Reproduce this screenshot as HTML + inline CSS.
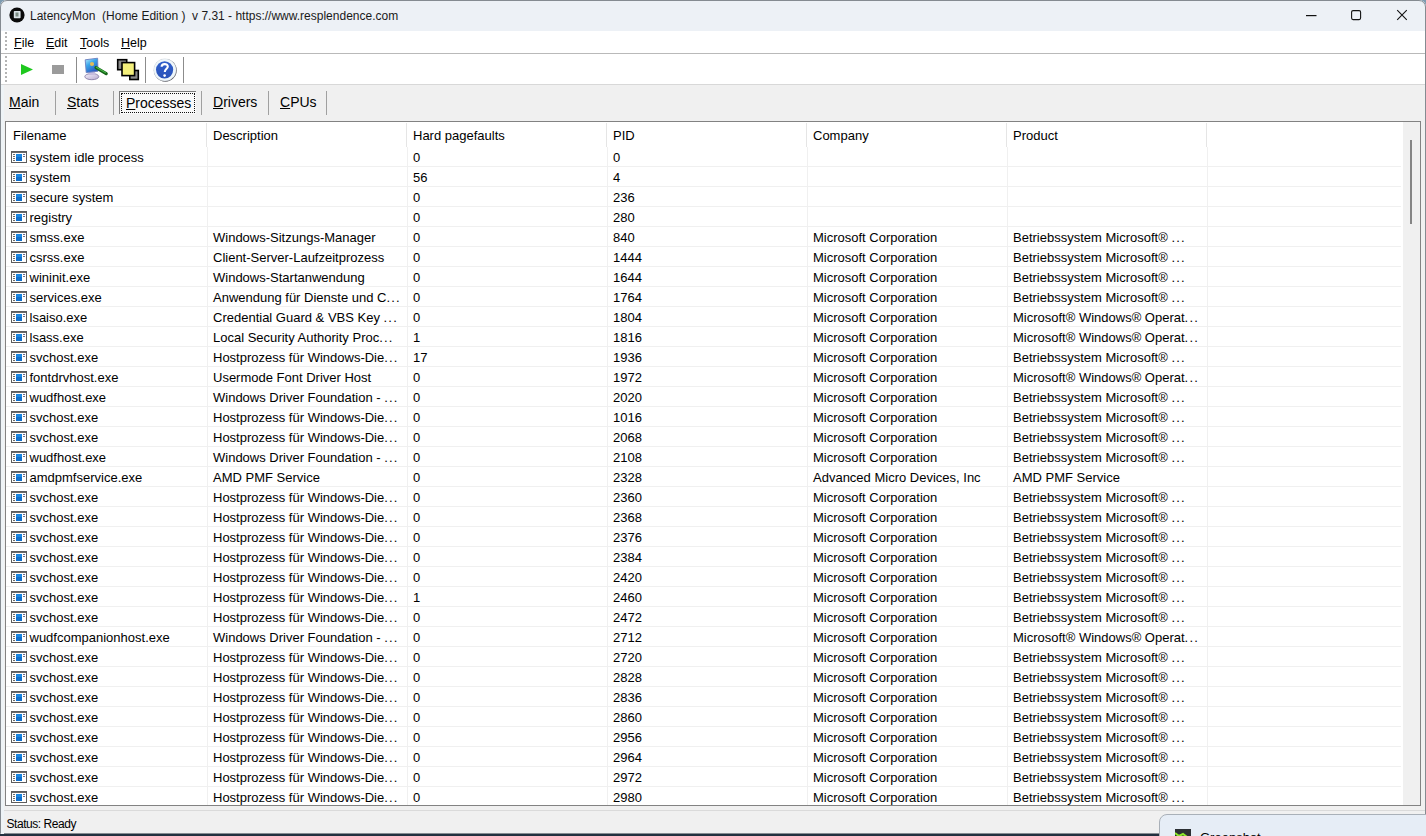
<!DOCTYPE html>
<html><head><meta charset="utf-8"><title>LatencyMon</title>
<style>
*{margin:0;padding:0;box-sizing:border-box}
html,body{width:1426px;height:836px;overflow:hidden;background:#7e9bb0;font-family:"Liberation Sans",sans-serif;color:#000}
.abs{position:absolute}
#win{position:absolute;left:0;top:0;width:1426px;height:834px;background:#f0f0f0;border-radius:7px 7px 0 0;overflow:hidden}
#frame{position:absolute;left:0;top:0;width:1426px;height:834px;border:1px solid #858b91;border-radius:7px 7px 0 0;pointer-events:none}
#title{position:absolute;left:0;top:0;width:1426px;height:31px;background:#edf1f6}
#ttext{position:absolute;left:30px;top:7.5px;font-size:12px;line-height:16px;color:#1a1a1a;white-space:pre}
#menu{position:absolute;left:0;top:31px;width:1426px;height:22px;background:#fff}
#mline{position:absolute;left:0;top:53px;width:1426px;height:1px;background:#b9b9b9}
#tool{position:absolute;left:0;top:54px;width:1426px;height:30px;background:#fff}
#tline{position:absolute;left:0;top:84px;width:1426px;height:1px;background:#d8d8d8}
.dot{position:absolute;left:5px;width:2px;height:2px;background:#b4b4b4}
.mi{position:absolute;top:36px;font-size:12.5px;line-height:15px;color:#000}
.u{text-decoration:underline;text-underline-offset:1px}
.tsep{position:absolute;top:57px;width:1px;height:26px;background:#8c8c8c}
.tab{position:absolute;top:94px;font-size:14px;line-height:16px;color:#000}
.tabsep{position:absolute;top:91px;width:1px;height:24px;background:#a0a0a0}
#grid{position:absolute;left:5px;top:121px;width:1416px;height:685px;background:#fff;border:1px solid #828282}
#sb{position:absolute;left:1403px;top:122px;width:17px;height:683px;background:#f0f0f0}
#thumb{position:absolute;left:1410px;top:140px;width:2px;height:84px;background:#858585}
.hl{position:absolute;left:6px;width:1395px;height:1px;background:#f0f0f0}
.vl{position:absolute;top:147px;width:1px;height:658px;background:#f0f0f0}
.hs{position:absolute;top:123px;width:1px;height:24px;background:#e5e5e5}
.hd{position:absolute;top:127.5px;font-size:13px;line-height:15px;white-space:nowrap;color:#000}
.row{position:absolute;left:0;width:1400px;height:20px}
.c{position:absolute;top:3px;font-size:13px;line-height:15px;white-space:nowrap;color:#000}
.el{letter-spacing:1.2px}
.ic{position:absolute;left:4px;top:1px}
.t0{position:absolute;left:22.5px;top:0}
#status{position:absolute;left:0;top:810px;width:1426px;height:1px;background:#dadada}
#stext{position:absolute;left:6.5px;top:817px;font-size:12px;letter-spacing:-0.45px;line-height:15px;color:#000}
#popup{position:absolute;left:1159px;top:814px;width:300px;height:40px;background:#e6edf6;border:1px solid #a9b0b8;border-radius:8px}
</style></head><body>
<div id="win">
 <div id="title">
  <svg class="abs" style="left:9px;top:7px" width="16" height="16" viewBox="0 0 16 16"><circle cx="8" cy="8" r="7.6" fill="#0b0b0b"/><rect x="4.8" y="4" width="6.8" height="7.2" rx="0.8" fill="#d9e2e6"/><rect x="6.5" y="5.5" width="3" height="4" fill="#7d8d84"/></svg>
  <div id="ttext">LatencyMon  (Home Edition )  v 7.31 - https://www.resplendence.com</div>
  <svg class="abs" style="left:1306px;top:15px" width="11" height="2"><rect x="0" y="0" width="10.5" height="1.2" fill="#111"/></svg>
  <svg class="abs" style="left:1350px;top:9px" width="12" height="12" viewBox="0 0 12 12"><rect x="1.6" y="1.6" width="9" height="9" rx="1.5" fill="none" stroke="#111" stroke-width="1.1"/></svg>
  <svg class="abs" style="left:1396px;top:9px" width="12" height="12" viewBox="0 0 12 12"><path d="M1.2 1.2 L10.8 10.8 M10.8 1.2 L1.2 10.8" stroke="#111" stroke-width="1.1"/></svg>
 </div>
 <div id="menu"></div>
 <div class="dot" style="top:32px"></div><div class="dot" style="top:36px"></div><div class="dot" style="top:40px"></div><div class="dot" style="top:44px"></div><div class="dot" style="top:48px"></div>
 <div class="mi" style="left:14px"><span class="u">F</span>ile</div>
 <div class="mi" style="left:46px"><span class="u">E</span>dit</div>
 <div class="mi" style="left:80px"><span class="u">T</span>ools</div>
 <div class="mi" style="left:121px"><span class="u">H</span>elp</div>
 <div id="mline"></div>
 <div id="tool"></div>
 <div id="tline"></div>
 <div class="dot" style="top:56px"></div><div class="dot" style="top:60px"></div><div class="dot" style="top:64px"></div><div class="dot" style="top:68px"></div><div class="dot" style="top:72px"></div><div class="dot" style="top:76px"></div><div class="dot" style="top:80px"></div>
 <svg class="abs" style="left:20px;top:63px" width="14" height="14" viewBox="0 0 14 14"><path d="M1 1 L13 6.5 L1 12 Z" fill="#1ec81e"/></svg>
 <div class="abs" style="left:52px;top:65px;width:12px;height:9px;background:#9b9b9b"></div>
 <div class="tsep" style="left:76px"></div>
 <svg class="abs" style="left:83px;top:57px" width="26" height="24" viewBox="0 0 26 24">
  <defs><linearGradient id="scr" x1="0" y1="0" x2="0.6" y2="1"><stop offset="0" stop-color="#bfeefc"/><stop offset="0.45" stop-color="#3aa6ea"/><stop offset="1" stop-color="#2858c0"/></linearGradient>
  <linearGradient id="bas" x1="0" y1="0" x2="1" y2="1"><stop offset="0" stop-color="#f4f0fa"/><stop offset="1" stop-color="#b8aad0"/></linearGradient></defs>
  <ellipse cx="8.8" cy="19.6" rx="7" ry="3.1" fill="url(#bas)" stroke="#8a7fa6" stroke-width="0.9"/>
  <path d="M6 14 L12 14 L12.5 18 L5.5 18 Z" fill="#c8bede"/>
  <path d="M2.2 2.8 L14.6 1.2 L15 14.2 L3.2 15.6 Z" fill="url(#scr)" stroke="#6a7ec0" stroke-width="0.9"/>
  <path d="M13 10.6 L23.2 16.6" stroke="#17661a" stroke-width="3.2" stroke-linecap="round"/>
  <path d="M13.4 10.3 L22.4 15.6" stroke="#4cbc4a" stroke-width="1.1" stroke-linecap="round"/>
  <circle cx="9" cy="7" r="2.1" fill="#e2bc58"/>
 </svg>
 <svg class="abs" style="left:116px;top:58px" width="25" height="23" viewBox="0 0 25 23">
  <rect x="1.7" y="1.7" width="9" height="10" fill="#8a8a8a" stroke="#000" stroke-width="1.6"/>
  <rect x="13.8" y="12.5" width="8.5" height="9" fill="#8a8a8a" stroke="#000" stroke-width="1.6"/>
  <rect x="6" y="4.6" width="12.6" height="13" fill="#f4f07c" stroke="#000" stroke-width="1.6"/>
 </svg>
 <div class="tsep" style="left:145px"></div>
 <svg class="abs" style="left:151px;top:57px" width="28" height="26" viewBox="0 0 28 26">
  <defs><linearGradient id="hb" x1="0" y1="0" x2="0" y2="1"><stop offset="0" stop-color="#2f5fcc"/><stop offset="1" stop-color="#2a52b8"/></linearGradient></defs>
  <circle cx="14.3" cy="13.3" r="11.4" fill="#4a4a52"/>
  <circle cx="13.9" cy="12.9" r="11.2" fill="#eef6fa" stroke="#d0d4dc" stroke-width="0.4"/>
  <circle cx="13.6" cy="12.8" r="8.6" fill="url(#hb)"/>
  <path d="M10.6 9.8 C10.6 6.4 16.8 6.2 16.8 9.6 C16.8 11.8 13.8 12 13.8 15" fill="none" stroke="#fff" stroke-width="2.1"/>
  <circle cx="13.6" cy="18.6" r="1.3" fill="#fff"/>
 </svg>
 <div class="tsep" style="left:183px"></div>

 <div class="tabsep" style="left:55px"></div>
 <div class="tabsep" style="left:113px"></div>
 <div class="tabsep" style="left:201px"></div>
 <div class="tabsep" style="left:268px"></div>
 <div class="tabsep" style="left:326px"></div>
 <div class="abs" style="left:119px;top:91px;width:77px;height:23px;background:#f9f9f9;border-top:1px solid #7a7a7a;border-left:1px solid #7a7a7a"></div>
 <div class="abs" style="left:121px;top:93px;width:74px;height:20px;border:1px dotted #111"></div>
 <div class="tab" style="left:9px"><span class="u">M</span>ain</div>
 <div class="tab" style="left:67px"><span class="u">S</span>tats</div>
 <div class="tab" style="left:126px;top:95px"><span class="u">P</span>rocesses</div>
 <div class="tab" style="left:213px"><span class="u">D</span>rivers</div>
 <div class="tab" style="left:280px"><span class="u">C</span>PUs</div>

 <div id="grid"></div>
 <div class="hs" style="left:206px"></div><div class="hs" style="left:406px"></div><div class="hs" style="left:606px"></div><div class="hs" style="left:806px"></div><div class="hs" style="left:1006px"></div><div class="hs" style="left:1206px"></div>
 <div class="hd" style="left:13px">Filename</div><div class="hd" style="left:213px">Description</div><div class="hd" style="left:413px">Hard pagefaults</div><div class="hd" style="left:613px">PID</div><div class="hd" style="left:813px">Company</div><div class="hd" style="left:1013px">Product</div>
 <div class="vl" style="left:207px"></div><div class="vl" style="left:407px"></div><div class="vl" style="left:607px"></div><div class="vl" style="left:807px"></div><div class="vl" style="left:1007px"></div><div class="vl" style="left:1207px"></div>
 <div class="hl" style="top:166px"></div><div class="hl" style="top:186px"></div><div class="hl" style="top:206px"></div><div class="hl" style="top:226px"></div><div class="hl" style="top:246px"></div><div class="hl" style="top:266px"></div><div class="hl" style="top:286px"></div><div class="hl" style="top:306px"></div><div class="hl" style="top:326px"></div><div class="hl" style="top:346px"></div><div class="hl" style="top:366px"></div><div class="hl" style="top:386px"></div><div class="hl" style="top:406px"></div><div class="hl" style="top:426px"></div><div class="hl" style="top:446px"></div><div class="hl" style="top:466px"></div><div class="hl" style="top:486px"></div><div class="hl" style="top:506px"></div><div class="hl" style="top:526px"></div><div class="hl" style="top:546px"></div><div class="hl" style="top:566px"></div><div class="hl" style="top:586px"></div><div class="hl" style="top:606px"></div><div class="hl" style="top:626px"></div><div class="hl" style="top:646px"></div><div class="hl" style="top:666px"></div><div class="hl" style="top:686px"></div><div class="hl" style="top:706px"></div><div class="hl" style="top:726px"></div><div class="hl" style="top:746px"></div><div class="hl" style="top:766px"></div><div class="hl" style="top:786px"></div>
 <div class="row" style="top:147px"><div class="c" style="left:7px"><svg class="ic" width="16" height="12" viewBox="0 0 16 12"><rect x="0.5" y="0.5" width="15" height="11" fill="#fff" stroke="#5c5c5c"/><rect x="1" y="1" width="14" height="1" fill="#6a6a6a"/><rect x="5" y="3" width="6" height="7" fill="#0f6fcc"/><rect x="5" y="3" width="6" height="3" fill="#1a86e0"/><rect x="2" y="3" width="2" height="1" fill="#6a6a6a"/><rect x="2" y="5" width="2" height="1" fill="#6a6a6a"/><rect x="2" y="7" width="2" height="1" fill="#6a6a6a"/><rect x="2" y="9" width="2" height="1" fill="#6a6a6a"/><rect x="12" y="3" width="2" height="1" fill="#6a6a8a"/><rect x="12" y="5" width="2" height="1" fill="#6a6a8a"/></svg><span class="t0">system idle process</span></div><div class="c" style="left:413px">0</div><div class="c" style="left:613px">0</div></div><div class="row" style="top:167px"><div class="c" style="left:7px"><svg class="ic" width="16" height="12" viewBox="0 0 16 12"><rect x="0.5" y="0.5" width="15" height="11" fill="#fff" stroke="#5c5c5c"/><rect x="1" y="1" width="14" height="1" fill="#6a6a6a"/><rect x="5" y="3" width="6" height="7" fill="#0f6fcc"/><rect x="5" y="3" width="6" height="3" fill="#1a86e0"/><rect x="2" y="3" width="2" height="1" fill="#6a6a6a"/><rect x="2" y="5" width="2" height="1" fill="#6a6a6a"/><rect x="2" y="7" width="2" height="1" fill="#6a6a6a"/><rect x="2" y="9" width="2" height="1" fill="#6a6a6a"/><rect x="12" y="3" width="2" height="1" fill="#6a6a8a"/><rect x="12" y="5" width="2" height="1" fill="#6a6a8a"/></svg><span class="t0">system</span></div><div class="c" style="left:413px">56</div><div class="c" style="left:613px">4</div></div><div class="row" style="top:187px"><div class="c" style="left:7px"><svg class="ic" width="16" height="12" viewBox="0 0 16 12"><rect x="0.5" y="0.5" width="15" height="11" fill="#fff" stroke="#5c5c5c"/><rect x="1" y="1" width="14" height="1" fill="#6a6a6a"/><rect x="5" y="3" width="6" height="7" fill="#0f6fcc"/><rect x="5" y="3" width="6" height="3" fill="#1a86e0"/><rect x="2" y="3" width="2" height="1" fill="#6a6a6a"/><rect x="2" y="5" width="2" height="1" fill="#6a6a6a"/><rect x="2" y="7" width="2" height="1" fill="#6a6a6a"/><rect x="2" y="9" width="2" height="1" fill="#6a6a6a"/><rect x="12" y="3" width="2" height="1" fill="#6a6a8a"/><rect x="12" y="5" width="2" height="1" fill="#6a6a8a"/></svg><span class="t0">secure system</span></div><div class="c" style="left:413px">0</div><div class="c" style="left:613px">236</div></div><div class="row" style="top:207px"><div class="c" style="left:7px"><svg class="ic" width="16" height="12" viewBox="0 0 16 12"><rect x="0.5" y="0.5" width="15" height="11" fill="#fff" stroke="#5c5c5c"/><rect x="1" y="1" width="14" height="1" fill="#6a6a6a"/><rect x="5" y="3" width="6" height="7" fill="#0f6fcc"/><rect x="5" y="3" width="6" height="3" fill="#1a86e0"/><rect x="2" y="3" width="2" height="1" fill="#6a6a6a"/><rect x="2" y="5" width="2" height="1" fill="#6a6a6a"/><rect x="2" y="7" width="2" height="1" fill="#6a6a6a"/><rect x="2" y="9" width="2" height="1" fill="#6a6a6a"/><rect x="12" y="3" width="2" height="1" fill="#6a6a8a"/><rect x="12" y="5" width="2" height="1" fill="#6a6a8a"/></svg><span class="t0">registry</span></div><div class="c" style="left:413px">0</div><div class="c" style="left:613px">280</div></div><div class="row" style="top:227px"><div class="c" style="left:7px"><svg class="ic" width="16" height="12" viewBox="0 0 16 12"><rect x="0.5" y="0.5" width="15" height="11" fill="#fff" stroke="#5c5c5c"/><rect x="1" y="1" width="14" height="1" fill="#6a6a6a"/><rect x="5" y="3" width="6" height="7" fill="#0f6fcc"/><rect x="5" y="3" width="6" height="3" fill="#1a86e0"/><rect x="2" y="3" width="2" height="1" fill="#6a6a6a"/><rect x="2" y="5" width="2" height="1" fill="#6a6a6a"/><rect x="2" y="7" width="2" height="1" fill="#6a6a6a"/><rect x="2" y="9" width="2" height="1" fill="#6a6a6a"/><rect x="12" y="3" width="2" height="1" fill="#6a6a8a"/><rect x="12" y="5" width="2" height="1" fill="#6a6a8a"/></svg><span class="t0">smss.exe</span></div><div class="c" style="left:213px">Windows-Sitzungs-Manager</div><div class="c" style="left:413px">0</div><div class="c" style="left:613px">840</div><div class="c" style="left:813px">Microsoft Corporation</div><div class="c" style="left:1013px">Betriebssystem Microsoft® <span class="el">...</span></div></div><div class="row" style="top:247px"><div class="c" style="left:7px"><svg class="ic" width="16" height="12" viewBox="0 0 16 12"><rect x="0.5" y="0.5" width="15" height="11" fill="#fff" stroke="#5c5c5c"/><rect x="1" y="1" width="14" height="1" fill="#6a6a6a"/><rect x="5" y="3" width="6" height="7" fill="#0f6fcc"/><rect x="5" y="3" width="6" height="3" fill="#1a86e0"/><rect x="2" y="3" width="2" height="1" fill="#6a6a6a"/><rect x="2" y="5" width="2" height="1" fill="#6a6a6a"/><rect x="2" y="7" width="2" height="1" fill="#6a6a6a"/><rect x="2" y="9" width="2" height="1" fill="#6a6a6a"/><rect x="12" y="3" width="2" height="1" fill="#6a6a8a"/><rect x="12" y="5" width="2" height="1" fill="#6a6a8a"/></svg><span class="t0">csrss.exe</span></div><div class="c" style="left:213px">Client-Server-Laufzeitprozess</div><div class="c" style="left:413px">0</div><div class="c" style="left:613px">1444</div><div class="c" style="left:813px">Microsoft Corporation</div><div class="c" style="left:1013px">Betriebssystem Microsoft® <span class="el">...</span></div></div><div class="row" style="top:267px"><div class="c" style="left:7px"><svg class="ic" width="16" height="12" viewBox="0 0 16 12"><rect x="0.5" y="0.5" width="15" height="11" fill="#fff" stroke="#5c5c5c"/><rect x="1" y="1" width="14" height="1" fill="#6a6a6a"/><rect x="5" y="3" width="6" height="7" fill="#0f6fcc"/><rect x="5" y="3" width="6" height="3" fill="#1a86e0"/><rect x="2" y="3" width="2" height="1" fill="#6a6a6a"/><rect x="2" y="5" width="2" height="1" fill="#6a6a6a"/><rect x="2" y="7" width="2" height="1" fill="#6a6a6a"/><rect x="2" y="9" width="2" height="1" fill="#6a6a6a"/><rect x="12" y="3" width="2" height="1" fill="#6a6a8a"/><rect x="12" y="5" width="2" height="1" fill="#6a6a8a"/></svg><span class="t0">wininit.exe</span></div><div class="c" style="left:213px">Windows-Startanwendung</div><div class="c" style="left:413px">0</div><div class="c" style="left:613px">1644</div><div class="c" style="left:813px">Microsoft Corporation</div><div class="c" style="left:1013px">Betriebssystem Microsoft® <span class="el">...</span></div></div><div class="row" style="top:287px"><div class="c" style="left:7px"><svg class="ic" width="16" height="12" viewBox="0 0 16 12"><rect x="0.5" y="0.5" width="15" height="11" fill="#fff" stroke="#5c5c5c"/><rect x="1" y="1" width="14" height="1" fill="#6a6a6a"/><rect x="5" y="3" width="6" height="7" fill="#0f6fcc"/><rect x="5" y="3" width="6" height="3" fill="#1a86e0"/><rect x="2" y="3" width="2" height="1" fill="#6a6a6a"/><rect x="2" y="5" width="2" height="1" fill="#6a6a6a"/><rect x="2" y="7" width="2" height="1" fill="#6a6a6a"/><rect x="2" y="9" width="2" height="1" fill="#6a6a6a"/><rect x="12" y="3" width="2" height="1" fill="#6a6a8a"/><rect x="12" y="5" width="2" height="1" fill="#6a6a8a"/></svg><span class="t0">services.exe</span></div><div class="c" style="left:213px">Anwendung für Dienste und C<span class="el">...</span></div><div class="c" style="left:413px">0</div><div class="c" style="left:613px">1764</div><div class="c" style="left:813px">Microsoft Corporation</div><div class="c" style="left:1013px">Betriebssystem Microsoft® <span class="el">...</span></div></div><div class="row" style="top:307px"><div class="c" style="left:7px"><svg class="ic" width="16" height="12" viewBox="0 0 16 12"><rect x="0.5" y="0.5" width="15" height="11" fill="#fff" stroke="#5c5c5c"/><rect x="1" y="1" width="14" height="1" fill="#6a6a6a"/><rect x="5" y="3" width="6" height="7" fill="#0f6fcc"/><rect x="5" y="3" width="6" height="3" fill="#1a86e0"/><rect x="2" y="3" width="2" height="1" fill="#6a6a6a"/><rect x="2" y="5" width="2" height="1" fill="#6a6a6a"/><rect x="2" y="7" width="2" height="1" fill="#6a6a6a"/><rect x="2" y="9" width="2" height="1" fill="#6a6a6a"/><rect x="12" y="3" width="2" height="1" fill="#6a6a8a"/><rect x="12" y="5" width="2" height="1" fill="#6a6a8a"/></svg><span class="t0">lsaiso.exe</span></div><div class="c" style="left:213px">Credential Guard &amp; VBS Key <span class="el">...</span></div><div class="c" style="left:413px">0</div><div class="c" style="left:613px">1804</div><div class="c" style="left:813px">Microsoft Corporation</div><div class="c" style="left:1013px">Microsoft® Windows® Operat<span class="el">...</span></div></div><div class="row" style="top:327px"><div class="c" style="left:7px"><svg class="ic" width="16" height="12" viewBox="0 0 16 12"><rect x="0.5" y="0.5" width="15" height="11" fill="#fff" stroke="#5c5c5c"/><rect x="1" y="1" width="14" height="1" fill="#6a6a6a"/><rect x="5" y="3" width="6" height="7" fill="#0f6fcc"/><rect x="5" y="3" width="6" height="3" fill="#1a86e0"/><rect x="2" y="3" width="2" height="1" fill="#6a6a6a"/><rect x="2" y="5" width="2" height="1" fill="#6a6a6a"/><rect x="2" y="7" width="2" height="1" fill="#6a6a6a"/><rect x="2" y="9" width="2" height="1" fill="#6a6a6a"/><rect x="12" y="3" width="2" height="1" fill="#6a6a8a"/><rect x="12" y="5" width="2" height="1" fill="#6a6a8a"/></svg><span class="t0">lsass.exe</span></div><div class="c" style="left:213px">Local Security Authority Proc<span class="el">...</span></div><div class="c" style="left:413px">1</div><div class="c" style="left:613px">1816</div><div class="c" style="left:813px">Microsoft Corporation</div><div class="c" style="left:1013px">Microsoft® Windows® Operat<span class="el">...</span></div></div><div class="row" style="top:347px"><div class="c" style="left:7px"><svg class="ic" width="16" height="12" viewBox="0 0 16 12"><rect x="0.5" y="0.5" width="15" height="11" fill="#fff" stroke="#5c5c5c"/><rect x="1" y="1" width="14" height="1" fill="#6a6a6a"/><rect x="5" y="3" width="6" height="7" fill="#0f6fcc"/><rect x="5" y="3" width="6" height="3" fill="#1a86e0"/><rect x="2" y="3" width="2" height="1" fill="#6a6a6a"/><rect x="2" y="5" width="2" height="1" fill="#6a6a6a"/><rect x="2" y="7" width="2" height="1" fill="#6a6a6a"/><rect x="2" y="9" width="2" height="1" fill="#6a6a6a"/><rect x="12" y="3" width="2" height="1" fill="#6a6a8a"/><rect x="12" y="5" width="2" height="1" fill="#6a6a8a"/></svg><span class="t0">svchost.exe</span></div><div class="c" style="left:213px">Hostprozess für Windows-Die<span class="el">...</span></div><div class="c" style="left:413px">17</div><div class="c" style="left:613px">1936</div><div class="c" style="left:813px">Microsoft Corporation</div><div class="c" style="left:1013px">Betriebssystem Microsoft® <span class="el">...</span></div></div><div class="row" style="top:367px"><div class="c" style="left:7px"><svg class="ic" width="16" height="12" viewBox="0 0 16 12"><rect x="0.5" y="0.5" width="15" height="11" fill="#fff" stroke="#5c5c5c"/><rect x="1" y="1" width="14" height="1" fill="#6a6a6a"/><rect x="5" y="3" width="6" height="7" fill="#0f6fcc"/><rect x="5" y="3" width="6" height="3" fill="#1a86e0"/><rect x="2" y="3" width="2" height="1" fill="#6a6a6a"/><rect x="2" y="5" width="2" height="1" fill="#6a6a6a"/><rect x="2" y="7" width="2" height="1" fill="#6a6a6a"/><rect x="2" y="9" width="2" height="1" fill="#6a6a6a"/><rect x="12" y="3" width="2" height="1" fill="#6a6a8a"/><rect x="12" y="5" width="2" height="1" fill="#6a6a8a"/></svg><span class="t0">fontdrvhost.exe</span></div><div class="c" style="left:213px">Usermode Font Driver Host</div><div class="c" style="left:413px">0</div><div class="c" style="left:613px">1972</div><div class="c" style="left:813px">Microsoft Corporation</div><div class="c" style="left:1013px">Microsoft® Windows® Operat<span class="el">...</span></div></div><div class="row" style="top:387px"><div class="c" style="left:7px"><svg class="ic" width="16" height="12" viewBox="0 0 16 12"><rect x="0.5" y="0.5" width="15" height="11" fill="#fff" stroke="#5c5c5c"/><rect x="1" y="1" width="14" height="1" fill="#6a6a6a"/><rect x="5" y="3" width="6" height="7" fill="#0f6fcc"/><rect x="5" y="3" width="6" height="3" fill="#1a86e0"/><rect x="2" y="3" width="2" height="1" fill="#6a6a6a"/><rect x="2" y="5" width="2" height="1" fill="#6a6a6a"/><rect x="2" y="7" width="2" height="1" fill="#6a6a6a"/><rect x="2" y="9" width="2" height="1" fill="#6a6a6a"/><rect x="12" y="3" width="2" height="1" fill="#6a6a8a"/><rect x="12" y="5" width="2" height="1" fill="#6a6a8a"/></svg><span class="t0">wudfhost.exe</span></div><div class="c" style="left:213px">Windows Driver Foundation - <span class="el">...</span></div><div class="c" style="left:413px">0</div><div class="c" style="left:613px">2020</div><div class="c" style="left:813px">Microsoft Corporation</div><div class="c" style="left:1013px">Betriebssystem Microsoft® <span class="el">...</span></div></div><div class="row" style="top:407px"><div class="c" style="left:7px"><svg class="ic" width="16" height="12" viewBox="0 0 16 12"><rect x="0.5" y="0.5" width="15" height="11" fill="#fff" stroke="#5c5c5c"/><rect x="1" y="1" width="14" height="1" fill="#6a6a6a"/><rect x="5" y="3" width="6" height="7" fill="#0f6fcc"/><rect x="5" y="3" width="6" height="3" fill="#1a86e0"/><rect x="2" y="3" width="2" height="1" fill="#6a6a6a"/><rect x="2" y="5" width="2" height="1" fill="#6a6a6a"/><rect x="2" y="7" width="2" height="1" fill="#6a6a6a"/><rect x="2" y="9" width="2" height="1" fill="#6a6a6a"/><rect x="12" y="3" width="2" height="1" fill="#6a6a8a"/><rect x="12" y="5" width="2" height="1" fill="#6a6a8a"/></svg><span class="t0">svchost.exe</span></div><div class="c" style="left:213px">Hostprozess für Windows-Die<span class="el">...</span></div><div class="c" style="left:413px">0</div><div class="c" style="left:613px">1016</div><div class="c" style="left:813px">Microsoft Corporation</div><div class="c" style="left:1013px">Betriebssystem Microsoft® <span class="el">...</span></div></div><div class="row" style="top:427px"><div class="c" style="left:7px"><svg class="ic" width="16" height="12" viewBox="0 0 16 12"><rect x="0.5" y="0.5" width="15" height="11" fill="#fff" stroke="#5c5c5c"/><rect x="1" y="1" width="14" height="1" fill="#6a6a6a"/><rect x="5" y="3" width="6" height="7" fill="#0f6fcc"/><rect x="5" y="3" width="6" height="3" fill="#1a86e0"/><rect x="2" y="3" width="2" height="1" fill="#6a6a6a"/><rect x="2" y="5" width="2" height="1" fill="#6a6a6a"/><rect x="2" y="7" width="2" height="1" fill="#6a6a6a"/><rect x="2" y="9" width="2" height="1" fill="#6a6a6a"/><rect x="12" y="3" width="2" height="1" fill="#6a6a8a"/><rect x="12" y="5" width="2" height="1" fill="#6a6a8a"/></svg><span class="t0">svchost.exe</span></div><div class="c" style="left:213px">Hostprozess für Windows-Die<span class="el">...</span></div><div class="c" style="left:413px">0</div><div class="c" style="left:613px">2068</div><div class="c" style="left:813px">Microsoft Corporation</div><div class="c" style="left:1013px">Betriebssystem Microsoft® <span class="el">...</span></div></div><div class="row" style="top:447px"><div class="c" style="left:7px"><svg class="ic" width="16" height="12" viewBox="0 0 16 12"><rect x="0.5" y="0.5" width="15" height="11" fill="#fff" stroke="#5c5c5c"/><rect x="1" y="1" width="14" height="1" fill="#6a6a6a"/><rect x="5" y="3" width="6" height="7" fill="#0f6fcc"/><rect x="5" y="3" width="6" height="3" fill="#1a86e0"/><rect x="2" y="3" width="2" height="1" fill="#6a6a6a"/><rect x="2" y="5" width="2" height="1" fill="#6a6a6a"/><rect x="2" y="7" width="2" height="1" fill="#6a6a6a"/><rect x="2" y="9" width="2" height="1" fill="#6a6a6a"/><rect x="12" y="3" width="2" height="1" fill="#6a6a8a"/><rect x="12" y="5" width="2" height="1" fill="#6a6a8a"/></svg><span class="t0">wudfhost.exe</span></div><div class="c" style="left:213px">Windows Driver Foundation - <span class="el">...</span></div><div class="c" style="left:413px">0</div><div class="c" style="left:613px">2108</div><div class="c" style="left:813px">Microsoft Corporation</div><div class="c" style="left:1013px">Betriebssystem Microsoft® <span class="el">...</span></div></div><div class="row" style="top:467px"><div class="c" style="left:7px"><svg class="ic" width="16" height="12" viewBox="0 0 16 12"><rect x="0.5" y="0.5" width="15" height="11" fill="#fff" stroke="#5c5c5c"/><rect x="1" y="1" width="14" height="1" fill="#6a6a6a"/><rect x="5" y="3" width="6" height="7" fill="#0f6fcc"/><rect x="5" y="3" width="6" height="3" fill="#1a86e0"/><rect x="2" y="3" width="2" height="1" fill="#6a6a6a"/><rect x="2" y="5" width="2" height="1" fill="#6a6a6a"/><rect x="2" y="7" width="2" height="1" fill="#6a6a6a"/><rect x="2" y="9" width="2" height="1" fill="#6a6a6a"/><rect x="12" y="3" width="2" height="1" fill="#6a6a8a"/><rect x="12" y="5" width="2" height="1" fill="#6a6a8a"/></svg><span class="t0">amdpmfservice.exe</span></div><div class="c" style="left:213px">AMD PMF Service</div><div class="c" style="left:413px">0</div><div class="c" style="left:613px">2328</div><div class="c" style="left:813px">Advanced Micro Devices, Inc</div><div class="c" style="left:1013px">AMD PMF Service</div></div><div class="row" style="top:487px"><div class="c" style="left:7px"><svg class="ic" width="16" height="12" viewBox="0 0 16 12"><rect x="0.5" y="0.5" width="15" height="11" fill="#fff" stroke="#5c5c5c"/><rect x="1" y="1" width="14" height="1" fill="#6a6a6a"/><rect x="5" y="3" width="6" height="7" fill="#0f6fcc"/><rect x="5" y="3" width="6" height="3" fill="#1a86e0"/><rect x="2" y="3" width="2" height="1" fill="#6a6a6a"/><rect x="2" y="5" width="2" height="1" fill="#6a6a6a"/><rect x="2" y="7" width="2" height="1" fill="#6a6a6a"/><rect x="2" y="9" width="2" height="1" fill="#6a6a6a"/><rect x="12" y="3" width="2" height="1" fill="#6a6a8a"/><rect x="12" y="5" width="2" height="1" fill="#6a6a8a"/></svg><span class="t0">svchost.exe</span></div><div class="c" style="left:213px">Hostprozess für Windows-Die<span class="el">...</span></div><div class="c" style="left:413px">0</div><div class="c" style="left:613px">2360</div><div class="c" style="left:813px">Microsoft Corporation</div><div class="c" style="left:1013px">Betriebssystem Microsoft® <span class="el">...</span></div></div><div class="row" style="top:507px"><div class="c" style="left:7px"><svg class="ic" width="16" height="12" viewBox="0 0 16 12"><rect x="0.5" y="0.5" width="15" height="11" fill="#fff" stroke="#5c5c5c"/><rect x="1" y="1" width="14" height="1" fill="#6a6a6a"/><rect x="5" y="3" width="6" height="7" fill="#0f6fcc"/><rect x="5" y="3" width="6" height="3" fill="#1a86e0"/><rect x="2" y="3" width="2" height="1" fill="#6a6a6a"/><rect x="2" y="5" width="2" height="1" fill="#6a6a6a"/><rect x="2" y="7" width="2" height="1" fill="#6a6a6a"/><rect x="2" y="9" width="2" height="1" fill="#6a6a6a"/><rect x="12" y="3" width="2" height="1" fill="#6a6a8a"/><rect x="12" y="5" width="2" height="1" fill="#6a6a8a"/></svg><span class="t0">svchost.exe</span></div><div class="c" style="left:213px">Hostprozess für Windows-Die<span class="el">...</span></div><div class="c" style="left:413px">0</div><div class="c" style="left:613px">2368</div><div class="c" style="left:813px">Microsoft Corporation</div><div class="c" style="left:1013px">Betriebssystem Microsoft® <span class="el">...</span></div></div><div class="row" style="top:527px"><div class="c" style="left:7px"><svg class="ic" width="16" height="12" viewBox="0 0 16 12"><rect x="0.5" y="0.5" width="15" height="11" fill="#fff" stroke="#5c5c5c"/><rect x="1" y="1" width="14" height="1" fill="#6a6a6a"/><rect x="5" y="3" width="6" height="7" fill="#0f6fcc"/><rect x="5" y="3" width="6" height="3" fill="#1a86e0"/><rect x="2" y="3" width="2" height="1" fill="#6a6a6a"/><rect x="2" y="5" width="2" height="1" fill="#6a6a6a"/><rect x="2" y="7" width="2" height="1" fill="#6a6a6a"/><rect x="2" y="9" width="2" height="1" fill="#6a6a6a"/><rect x="12" y="3" width="2" height="1" fill="#6a6a8a"/><rect x="12" y="5" width="2" height="1" fill="#6a6a8a"/></svg><span class="t0">svchost.exe</span></div><div class="c" style="left:213px">Hostprozess für Windows-Die<span class="el">...</span></div><div class="c" style="left:413px">0</div><div class="c" style="left:613px">2376</div><div class="c" style="left:813px">Microsoft Corporation</div><div class="c" style="left:1013px">Betriebssystem Microsoft® <span class="el">...</span></div></div><div class="row" style="top:547px"><div class="c" style="left:7px"><svg class="ic" width="16" height="12" viewBox="0 0 16 12"><rect x="0.5" y="0.5" width="15" height="11" fill="#fff" stroke="#5c5c5c"/><rect x="1" y="1" width="14" height="1" fill="#6a6a6a"/><rect x="5" y="3" width="6" height="7" fill="#0f6fcc"/><rect x="5" y="3" width="6" height="3" fill="#1a86e0"/><rect x="2" y="3" width="2" height="1" fill="#6a6a6a"/><rect x="2" y="5" width="2" height="1" fill="#6a6a6a"/><rect x="2" y="7" width="2" height="1" fill="#6a6a6a"/><rect x="2" y="9" width="2" height="1" fill="#6a6a6a"/><rect x="12" y="3" width="2" height="1" fill="#6a6a8a"/><rect x="12" y="5" width="2" height="1" fill="#6a6a8a"/></svg><span class="t0">svchost.exe</span></div><div class="c" style="left:213px">Hostprozess für Windows-Die<span class="el">...</span></div><div class="c" style="left:413px">0</div><div class="c" style="left:613px">2384</div><div class="c" style="left:813px">Microsoft Corporation</div><div class="c" style="left:1013px">Betriebssystem Microsoft® <span class="el">...</span></div></div><div class="row" style="top:567px"><div class="c" style="left:7px"><svg class="ic" width="16" height="12" viewBox="0 0 16 12"><rect x="0.5" y="0.5" width="15" height="11" fill="#fff" stroke="#5c5c5c"/><rect x="1" y="1" width="14" height="1" fill="#6a6a6a"/><rect x="5" y="3" width="6" height="7" fill="#0f6fcc"/><rect x="5" y="3" width="6" height="3" fill="#1a86e0"/><rect x="2" y="3" width="2" height="1" fill="#6a6a6a"/><rect x="2" y="5" width="2" height="1" fill="#6a6a6a"/><rect x="2" y="7" width="2" height="1" fill="#6a6a6a"/><rect x="2" y="9" width="2" height="1" fill="#6a6a6a"/><rect x="12" y="3" width="2" height="1" fill="#6a6a8a"/><rect x="12" y="5" width="2" height="1" fill="#6a6a8a"/></svg><span class="t0">svchost.exe</span></div><div class="c" style="left:213px">Hostprozess für Windows-Die<span class="el">...</span></div><div class="c" style="left:413px">0</div><div class="c" style="left:613px">2420</div><div class="c" style="left:813px">Microsoft Corporation</div><div class="c" style="left:1013px">Betriebssystem Microsoft® <span class="el">...</span></div></div><div class="row" style="top:587px"><div class="c" style="left:7px"><svg class="ic" width="16" height="12" viewBox="0 0 16 12"><rect x="0.5" y="0.5" width="15" height="11" fill="#fff" stroke="#5c5c5c"/><rect x="1" y="1" width="14" height="1" fill="#6a6a6a"/><rect x="5" y="3" width="6" height="7" fill="#0f6fcc"/><rect x="5" y="3" width="6" height="3" fill="#1a86e0"/><rect x="2" y="3" width="2" height="1" fill="#6a6a6a"/><rect x="2" y="5" width="2" height="1" fill="#6a6a6a"/><rect x="2" y="7" width="2" height="1" fill="#6a6a6a"/><rect x="2" y="9" width="2" height="1" fill="#6a6a6a"/><rect x="12" y="3" width="2" height="1" fill="#6a6a8a"/><rect x="12" y="5" width="2" height="1" fill="#6a6a8a"/></svg><span class="t0">svchost.exe</span></div><div class="c" style="left:213px">Hostprozess für Windows-Die<span class="el">...</span></div><div class="c" style="left:413px">1</div><div class="c" style="left:613px">2460</div><div class="c" style="left:813px">Microsoft Corporation</div><div class="c" style="left:1013px">Betriebssystem Microsoft® <span class="el">...</span></div></div><div class="row" style="top:607px"><div class="c" style="left:7px"><svg class="ic" width="16" height="12" viewBox="0 0 16 12"><rect x="0.5" y="0.5" width="15" height="11" fill="#fff" stroke="#5c5c5c"/><rect x="1" y="1" width="14" height="1" fill="#6a6a6a"/><rect x="5" y="3" width="6" height="7" fill="#0f6fcc"/><rect x="5" y="3" width="6" height="3" fill="#1a86e0"/><rect x="2" y="3" width="2" height="1" fill="#6a6a6a"/><rect x="2" y="5" width="2" height="1" fill="#6a6a6a"/><rect x="2" y="7" width="2" height="1" fill="#6a6a6a"/><rect x="2" y="9" width="2" height="1" fill="#6a6a6a"/><rect x="12" y="3" width="2" height="1" fill="#6a6a8a"/><rect x="12" y="5" width="2" height="1" fill="#6a6a8a"/></svg><span class="t0">svchost.exe</span></div><div class="c" style="left:213px">Hostprozess für Windows-Die<span class="el">...</span></div><div class="c" style="left:413px">0</div><div class="c" style="left:613px">2472</div><div class="c" style="left:813px">Microsoft Corporation</div><div class="c" style="left:1013px">Betriebssystem Microsoft® <span class="el">...</span></div></div><div class="row" style="top:627px"><div class="c" style="left:7px"><svg class="ic" width="16" height="12" viewBox="0 0 16 12"><rect x="0.5" y="0.5" width="15" height="11" fill="#fff" stroke="#5c5c5c"/><rect x="1" y="1" width="14" height="1" fill="#6a6a6a"/><rect x="5" y="3" width="6" height="7" fill="#0f6fcc"/><rect x="5" y="3" width="6" height="3" fill="#1a86e0"/><rect x="2" y="3" width="2" height="1" fill="#6a6a6a"/><rect x="2" y="5" width="2" height="1" fill="#6a6a6a"/><rect x="2" y="7" width="2" height="1" fill="#6a6a6a"/><rect x="2" y="9" width="2" height="1" fill="#6a6a6a"/><rect x="12" y="3" width="2" height="1" fill="#6a6a8a"/><rect x="12" y="5" width="2" height="1" fill="#6a6a8a"/></svg><span class="t0">wudfcompanionhost.exe</span></div><div class="c" style="left:213px">Windows Driver Foundation - <span class="el">...</span></div><div class="c" style="left:413px">0</div><div class="c" style="left:613px">2712</div><div class="c" style="left:813px">Microsoft Corporation</div><div class="c" style="left:1013px">Microsoft® Windows® Operat<span class="el">...</span></div></div><div class="row" style="top:647px"><div class="c" style="left:7px"><svg class="ic" width="16" height="12" viewBox="0 0 16 12"><rect x="0.5" y="0.5" width="15" height="11" fill="#fff" stroke="#5c5c5c"/><rect x="1" y="1" width="14" height="1" fill="#6a6a6a"/><rect x="5" y="3" width="6" height="7" fill="#0f6fcc"/><rect x="5" y="3" width="6" height="3" fill="#1a86e0"/><rect x="2" y="3" width="2" height="1" fill="#6a6a6a"/><rect x="2" y="5" width="2" height="1" fill="#6a6a6a"/><rect x="2" y="7" width="2" height="1" fill="#6a6a6a"/><rect x="2" y="9" width="2" height="1" fill="#6a6a6a"/><rect x="12" y="3" width="2" height="1" fill="#6a6a8a"/><rect x="12" y="5" width="2" height="1" fill="#6a6a8a"/></svg><span class="t0">svchost.exe</span></div><div class="c" style="left:213px">Hostprozess für Windows-Die<span class="el">...</span></div><div class="c" style="left:413px">0</div><div class="c" style="left:613px">2720</div><div class="c" style="left:813px">Microsoft Corporation</div><div class="c" style="left:1013px">Betriebssystem Microsoft® <span class="el">...</span></div></div><div class="row" style="top:667px"><div class="c" style="left:7px"><svg class="ic" width="16" height="12" viewBox="0 0 16 12"><rect x="0.5" y="0.5" width="15" height="11" fill="#fff" stroke="#5c5c5c"/><rect x="1" y="1" width="14" height="1" fill="#6a6a6a"/><rect x="5" y="3" width="6" height="7" fill="#0f6fcc"/><rect x="5" y="3" width="6" height="3" fill="#1a86e0"/><rect x="2" y="3" width="2" height="1" fill="#6a6a6a"/><rect x="2" y="5" width="2" height="1" fill="#6a6a6a"/><rect x="2" y="7" width="2" height="1" fill="#6a6a6a"/><rect x="2" y="9" width="2" height="1" fill="#6a6a6a"/><rect x="12" y="3" width="2" height="1" fill="#6a6a8a"/><rect x="12" y="5" width="2" height="1" fill="#6a6a8a"/></svg><span class="t0">svchost.exe</span></div><div class="c" style="left:213px">Hostprozess für Windows-Die<span class="el">...</span></div><div class="c" style="left:413px">0</div><div class="c" style="left:613px">2828</div><div class="c" style="left:813px">Microsoft Corporation</div><div class="c" style="left:1013px">Betriebssystem Microsoft® <span class="el">...</span></div></div><div class="row" style="top:687px"><div class="c" style="left:7px"><svg class="ic" width="16" height="12" viewBox="0 0 16 12"><rect x="0.5" y="0.5" width="15" height="11" fill="#fff" stroke="#5c5c5c"/><rect x="1" y="1" width="14" height="1" fill="#6a6a6a"/><rect x="5" y="3" width="6" height="7" fill="#0f6fcc"/><rect x="5" y="3" width="6" height="3" fill="#1a86e0"/><rect x="2" y="3" width="2" height="1" fill="#6a6a6a"/><rect x="2" y="5" width="2" height="1" fill="#6a6a6a"/><rect x="2" y="7" width="2" height="1" fill="#6a6a6a"/><rect x="2" y="9" width="2" height="1" fill="#6a6a6a"/><rect x="12" y="3" width="2" height="1" fill="#6a6a8a"/><rect x="12" y="5" width="2" height="1" fill="#6a6a8a"/></svg><span class="t0">svchost.exe</span></div><div class="c" style="left:213px">Hostprozess für Windows-Die<span class="el">...</span></div><div class="c" style="left:413px">0</div><div class="c" style="left:613px">2836</div><div class="c" style="left:813px">Microsoft Corporation</div><div class="c" style="left:1013px">Betriebssystem Microsoft® <span class="el">...</span></div></div><div class="row" style="top:707px"><div class="c" style="left:7px"><svg class="ic" width="16" height="12" viewBox="0 0 16 12"><rect x="0.5" y="0.5" width="15" height="11" fill="#fff" stroke="#5c5c5c"/><rect x="1" y="1" width="14" height="1" fill="#6a6a6a"/><rect x="5" y="3" width="6" height="7" fill="#0f6fcc"/><rect x="5" y="3" width="6" height="3" fill="#1a86e0"/><rect x="2" y="3" width="2" height="1" fill="#6a6a6a"/><rect x="2" y="5" width="2" height="1" fill="#6a6a6a"/><rect x="2" y="7" width="2" height="1" fill="#6a6a6a"/><rect x="2" y="9" width="2" height="1" fill="#6a6a6a"/><rect x="12" y="3" width="2" height="1" fill="#6a6a8a"/><rect x="12" y="5" width="2" height="1" fill="#6a6a8a"/></svg><span class="t0">svchost.exe</span></div><div class="c" style="left:213px">Hostprozess für Windows-Die<span class="el">...</span></div><div class="c" style="left:413px">0</div><div class="c" style="left:613px">2860</div><div class="c" style="left:813px">Microsoft Corporation</div><div class="c" style="left:1013px">Betriebssystem Microsoft® <span class="el">...</span></div></div><div class="row" style="top:727px"><div class="c" style="left:7px"><svg class="ic" width="16" height="12" viewBox="0 0 16 12"><rect x="0.5" y="0.5" width="15" height="11" fill="#fff" stroke="#5c5c5c"/><rect x="1" y="1" width="14" height="1" fill="#6a6a6a"/><rect x="5" y="3" width="6" height="7" fill="#0f6fcc"/><rect x="5" y="3" width="6" height="3" fill="#1a86e0"/><rect x="2" y="3" width="2" height="1" fill="#6a6a6a"/><rect x="2" y="5" width="2" height="1" fill="#6a6a6a"/><rect x="2" y="7" width="2" height="1" fill="#6a6a6a"/><rect x="2" y="9" width="2" height="1" fill="#6a6a6a"/><rect x="12" y="3" width="2" height="1" fill="#6a6a8a"/><rect x="12" y="5" width="2" height="1" fill="#6a6a8a"/></svg><span class="t0">svchost.exe</span></div><div class="c" style="left:213px">Hostprozess für Windows-Die<span class="el">...</span></div><div class="c" style="left:413px">0</div><div class="c" style="left:613px">2956</div><div class="c" style="left:813px">Microsoft Corporation</div><div class="c" style="left:1013px">Betriebssystem Microsoft® <span class="el">...</span></div></div><div class="row" style="top:747px"><div class="c" style="left:7px"><svg class="ic" width="16" height="12" viewBox="0 0 16 12"><rect x="0.5" y="0.5" width="15" height="11" fill="#fff" stroke="#5c5c5c"/><rect x="1" y="1" width="14" height="1" fill="#6a6a6a"/><rect x="5" y="3" width="6" height="7" fill="#0f6fcc"/><rect x="5" y="3" width="6" height="3" fill="#1a86e0"/><rect x="2" y="3" width="2" height="1" fill="#6a6a6a"/><rect x="2" y="5" width="2" height="1" fill="#6a6a6a"/><rect x="2" y="7" width="2" height="1" fill="#6a6a6a"/><rect x="2" y="9" width="2" height="1" fill="#6a6a6a"/><rect x="12" y="3" width="2" height="1" fill="#6a6a8a"/><rect x="12" y="5" width="2" height="1" fill="#6a6a8a"/></svg><span class="t0">svchost.exe</span></div><div class="c" style="left:213px">Hostprozess für Windows-Die<span class="el">...</span></div><div class="c" style="left:413px">0</div><div class="c" style="left:613px">2964</div><div class="c" style="left:813px">Microsoft Corporation</div><div class="c" style="left:1013px">Betriebssystem Microsoft® <span class="el">...</span></div></div><div class="row" style="top:767px"><div class="c" style="left:7px"><svg class="ic" width="16" height="12" viewBox="0 0 16 12"><rect x="0.5" y="0.5" width="15" height="11" fill="#fff" stroke="#5c5c5c"/><rect x="1" y="1" width="14" height="1" fill="#6a6a6a"/><rect x="5" y="3" width="6" height="7" fill="#0f6fcc"/><rect x="5" y="3" width="6" height="3" fill="#1a86e0"/><rect x="2" y="3" width="2" height="1" fill="#6a6a6a"/><rect x="2" y="5" width="2" height="1" fill="#6a6a6a"/><rect x="2" y="7" width="2" height="1" fill="#6a6a6a"/><rect x="2" y="9" width="2" height="1" fill="#6a6a6a"/><rect x="12" y="3" width="2" height="1" fill="#6a6a8a"/><rect x="12" y="5" width="2" height="1" fill="#6a6a8a"/></svg><span class="t0">svchost.exe</span></div><div class="c" style="left:213px">Hostprozess für Windows-Die<span class="el">...</span></div><div class="c" style="left:413px">0</div><div class="c" style="left:613px">2972</div><div class="c" style="left:813px">Microsoft Corporation</div><div class="c" style="left:1013px">Betriebssystem Microsoft® <span class="el">...</span></div></div><div class="row" style="top:787px"><div class="c" style="left:7px"><svg class="ic" width="16" height="12" viewBox="0 0 16 12"><rect x="0.5" y="0.5" width="15" height="11" fill="#fff" stroke="#5c5c5c"/><rect x="1" y="1" width="14" height="1" fill="#6a6a6a"/><rect x="5" y="3" width="6" height="7" fill="#0f6fcc"/><rect x="5" y="3" width="6" height="3" fill="#1a86e0"/><rect x="2" y="3" width="2" height="1" fill="#6a6a6a"/><rect x="2" y="5" width="2" height="1" fill="#6a6a6a"/><rect x="2" y="7" width="2" height="1" fill="#6a6a6a"/><rect x="2" y="9" width="2" height="1" fill="#6a6a6a"/><rect x="12" y="3" width="2" height="1" fill="#6a6a8a"/><rect x="12" y="5" width="2" height="1" fill="#6a6a8a"/></svg><span class="t0">svchost.exe</span></div><div class="c" style="left:213px">Hostprozess für Windows-Die<span class="el">...</span></div><div class="c" style="left:413px">0</div><div class="c" style="left:613px">2980</div><div class="c" style="left:813px">Microsoft Corporation</div><div class="c" style="left:1013px">Betriebssystem Microsoft® <span class="el">...</span></div></div>
 <div id="sb"></div>
 <div id="thumb"></div>
 <div id="status"></div>
 <div id="stext">Status: Ready</div>
</div>
<div id="frame"></div>
<div class="abs" style="left:0;top:834px;width:1426px;height:2px;background:#22303f"></div>
<div class="abs" style="left:1px;top:85px;width:3px;height:749px;background:#eef3f6"></div>
<div id="popup">
 <div class="abs" style="left:15px;top:14px;width:16px;height:16px;background:#2b2f33"></div>
 <svg class="abs" style="left:15px;top:14px" width="16" height="10" viewBox="0 0 16 10"><path d="M0 4 L4 7 L8 5 L16 11" fill="none" stroke="#8ee82a" stroke-width="2"/></svg>
 <div class="abs" style="left:40px;top:15px;font-size:13px;line-height:16px;color:#000">Greenshot</div>
</div>
</body></html>
